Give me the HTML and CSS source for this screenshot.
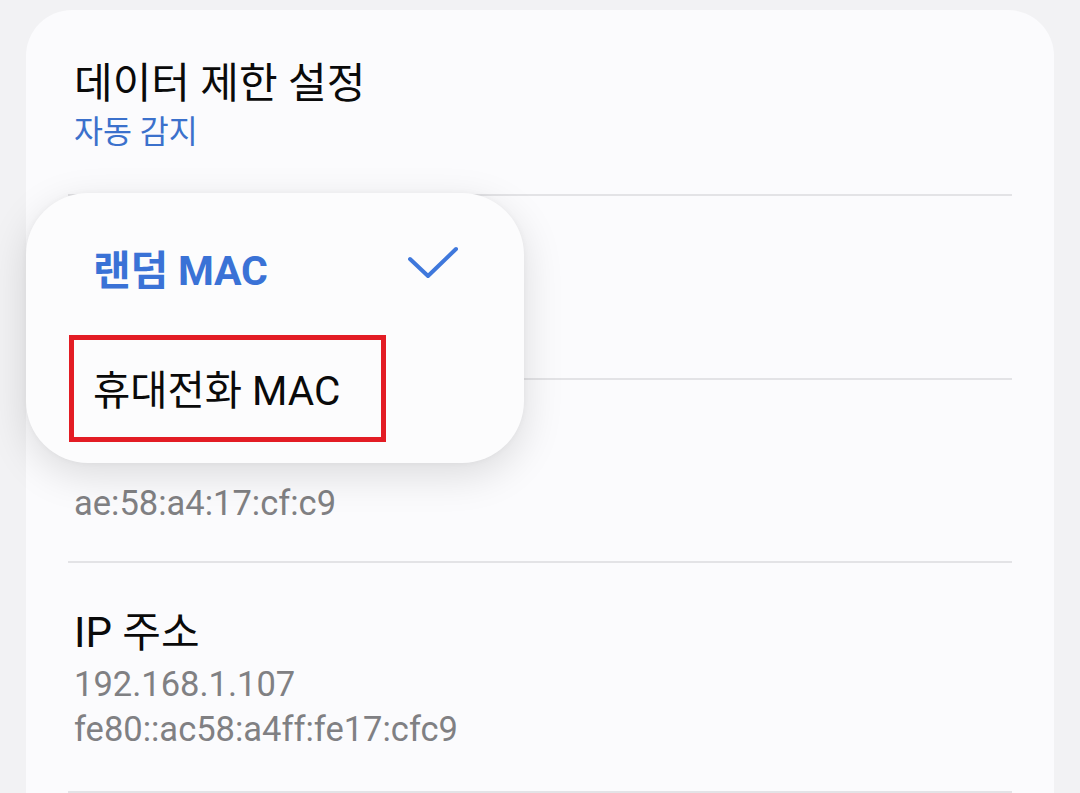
FILE: index.html
```html
<!DOCTYPE html>
<html lang="ko">
<head>
<meta charset="utf-8">
<link rel="stylesheet" href="styles.css">
</head>
<body>
<div class="screen">
  <div class="card">
    <div class="row row-data">
      <div class="title">데이터 제한 설정</div>
      <div class="sub blue">자동 감지</div>
    </div>
    <div class="divider"></div>
    <div class="row row-type"></div>
    <div class="divider"></div>
    <div class="row row-mac">
      <div class="value">ae:58:a4:17:cf:c9</div>
    </div>
    <div class="divider"></div>
    <div class="row row-ip">
      <div class="title">IP 주소</div>
      <div class="value">192.168.1.107</div>
      <div class="value">fe80::ac58:a4ff:fe17:cfc9</div>
    </div>
    <div class="divider"></div>
  </div>

  <div class="popup">
    <div class="item item-selected">
      <span class="item-label">랜덤 MAC</span>
      <svg class="check" width="52" height="36" viewBox="0 0 52 36">
        <polyline points="3,13 21,30 49,3" fill="none" stroke="#3f78dc" stroke-width="4" stroke-linecap="round" stroke-linejoin="round"/>
      </svg>
    </div>
    <div class="item item-other">
      <span class="highlight">휴대전화 MAC</span>
    </div>
  </div>
</div>
</body>
</html>
```

FILE: styles.css
```css
html, body {
  margin: 0;
  padding: 0;
}
body {
  background: #f2f2f4;
  font-family: "Roboto", "Noto Sans CJK KR", sans-serif;
  width: 1080px;
  height: 793px;
  overflow: hidden;
}
.screen {
  position: relative;
  width: 1080px;
  height: 793px;
  padding-top: 10px;
  box-sizing: border-box;
}
.card {
  margin-left: 26px;
  width: 1028px;
  height: 800px;
  background: #fbfbfd;
  border-radius: 46px 46px 0 0;
  padding: 0 42px;
  box-sizing: border-box;
}
.divider {
  height: 2px;
  background: #e3e3e6;
}
.row {
  padding-left: 6px;
  box-sizing: border-box;
}
.row-data {
  height: 184px;
  padding-top: 45px;
}
.row-type {
  height: 182px;
}
.row-mac {
  height: 181px;
  padding-top: 101px;
}
.row-ip {
  height: 228px;
  padding-top: 41px;
}
.title {
  font-size: 42px;
  line-height: 58px;
  color: #0a0a0a;
}
.sub {
  font-size: 31.5px;
  line-height: 40px;
}
.blue {
  color: #3b71cc;
}
.value {
  font-size: 34.5px;
  line-height: 45px;
  color: #808083;
}
.popup {
  position: absolute;
  left: 26px;
  top: 193px;
  width: 498px;
  height: 270px;
  background: #fcfcfd;
  border-radius: 62px;
  box-shadow: 0 12px 40px rgba(0, 0, 0, 0.13), 0 0 6px rgba(0, 0, 0, 0.04);
  padding-top: 16px;
  box-sizing: border-box;
}
.item {
  display: flex;
  align-items: center;
}
.item-selected {
  height: 126px;
  padding: 0 67px;
  justify-content: space-between;
}
.item-label {
  font-size: 41px;
  font-weight: 700;
  color: #3a72d6;
  letter-spacing: -0.2px;
  margin-top: -11px;
}
.check {
  margin-top: -17px;
  margin-right: -2px;
}
.item-other {
  padding-left: 43px;
}
.highlight {
  display: flex;
  align-items: center;
  width: 317px;
  height: 107px;
  border: 5px solid #e31c24;
  box-sizing: border-box;
  padding-left: 19px;
  padding-bottom: 3px;
  font-size: 40.5px;
  color: #0a0a0a;
}
```
